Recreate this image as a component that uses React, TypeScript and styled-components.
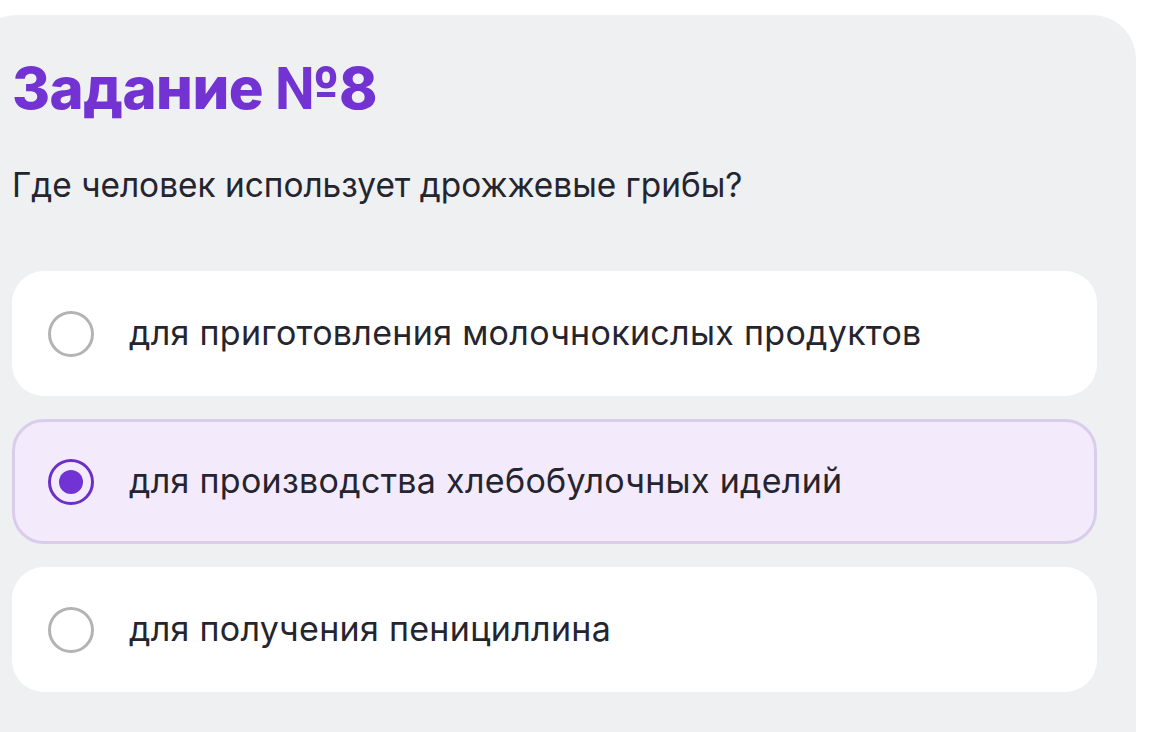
import React, { useState } from 'react';
import styled, { createGlobalStyle, css } from 'styled-components';

const GlobalStyle = createGlobalStyle`
  html, body {
    margin: 0;
    padding: 0;
    background: #ffffff;
    overflow: hidden;
  }
  body {
    font-family: Inter, "Noto Sans", "Liberation Sans", sans-serif;
  }
`;

const Page = styled.div`
  width: 1171px;
  height: 732px;
  padding-top: 15px;
  box-sizing: border-box;
  overflow: hidden;
`;

const Panel = styled.section`
  margin-left: -28px;
  width: 1164px;
  min-height: 760px;
  box-sizing: border-box;
  padding: 37px 39px 0 40px;
  background: #eff0f2;
  border-radius: 44px;
`;

const Title = styled.h1`
  margin: 0;
  font-size: 58px;
  line-height: 72px;
  font-weight: 800;
  letter-spacing: -0.5px;
  color: #7333d2;
`;

const Question = styled.p`
  margin: 41px 0 0;
  font-size: 33.4px;
  line-height: 40px;
  font-weight: 400;
  color: #25252f;
`;

const Options = styled.div`
  margin-top: 66px;
  display: flex;
  flex-direction: column;
  gap: 23px;
`;

const Option = styled.label<{ $active: boolean }>`
  display: flex;
  align-items: center;
  gap: 35px;
  height: 125px;
  box-sizing: border-box;
  padding: 0 33px;
  border-radius: 32px;
  background: #ffffff;
  border: 3px solid transparent;
  cursor: pointer;
  ${({ $active }) =>
    $active &&
    css`
      background: #f3ebfc;
      border-color: #dacdec;
    `}
`;

const Radio = styled.span<{ $active: boolean }>`
  flex: none;
  width: 46px;
  height: 46px;
  box-sizing: border-box;
  border-radius: 50%;
  border: 3px solid ${({ $active }) => ($active ? '#6b30c6' : '#b3b3b3')};
  display: flex;
  align-items: center;
  justify-content: center;

  &::after {
    content: '';
    width: 24px;
    height: 24px;
    border-radius: 50%;
    background: #7233d4;
    display: ${({ $active }) => ($active ? 'block' : 'none')};
  }
`;

const OptionText = styled.span`
  font-size: 34px;
  line-height: 40px;
  letter-spacing: 0.3px;
  color: #25252f;
  padding-bottom: 2px;
`;

const answers = [
  'для приготовления молочнокислых продуктов',
  'для производства хлебобулочных иделий',
  'для получения пенициллина',
];

export default function App() {
  const [selected, setSelected] = useState(1);

  return (
    <Page>
      <GlobalStyle />
      <Panel>
        <Title>Задание №8</Title>
        <Question>Где человек использует дрожжевые грибы?</Question>
        <Options>
          {answers.map((text, i) => (
            <Option key={text} $active={selected === i} onClick={() => setSelected(i)}>
              <Radio $active={selected === i} />
              <OptionText>{text}</OptionText>
            </Option>
          ))}
        </Options>
      </Panel>
    </Page>
  );
}
